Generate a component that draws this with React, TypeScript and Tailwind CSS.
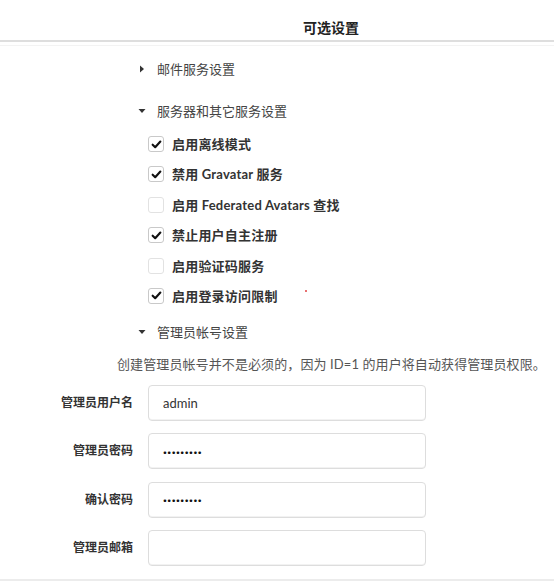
import React from 'react'

const FONT = "font-['Lato','Noto_Sans_CJK_SC',sans-serif]"

const OPTIONS = [
  { label: '启用离线模式', checked: true },
  { label: '禁用 Gravatar 服务', checked: true },
  { label: '启用 Federated Avatars 查找', checked: false },
  { label: '禁止用户自主注册', checked: true },
  { label: '启用验证码服务', checked: false },
  { label: '启用登录访问限制', checked: true },
]

const FIELDS = [
  { label: '管理员用户名', value: 'admin', dots: false },
  { label: '管理员密码', value: '·········', dots: true },
  { label: '确认密码', value: '·········', dots: true },
  { label: '管理员邮箱', value: '', dots: false },
]

function Arrow({ open }: { open: boolean }) {
  return open ? (
    <svg width="8" height="8" viewBox="0 0 8 8">
      <path d="M0.5 2 L7.5 2 L4 6 Z" fill="#333" />
    </svg>
  ) : (
    <svg width="8" height="8" viewBox="0 0 8 8">
      <path d="M2 0.5 L6 4 L2 7.5 Z" fill="#333" />
    </svg>
  )
}

function Section({ title, open }: { title: string; open: boolean }) {
  return (
    <div className="flex items-center h-[20px] pl-[138px]">
      <Arrow open={open} />
      <span className="ml-[11px] text-[13px] text-[#444] leading-[20px]">{title}</span>
    </div>
  )
}

function Check({ checked }: { checked: boolean }) {
  return (
    <span className={`flex items-center justify-center w-[16px] h-[16px] rounded-[3px] border ${checked ? 'border-[#c9c9c9]' : 'border-[#e2e2e2]'} bg-white`}>
      {checked && (
        <svg width="11" height="11" viewBox="0 0 12 12">
          <path d="M1.8 6.2 L4.6 9 L10.2 2.8" fill="none" stroke="#111" strokeWidth="2.3" strokeLinecap="round" strokeLinejoin="round" />
        </svg>
      )}
    </span>
  )
}

export default function App() {
  return (
    <div className={`relative w-[554px] h-[588px] bg-white overflow-hidden ${FONT}`}>
      {/* header */}
      <div className="h-[42px] pt-[18px] pl-[108px] flex justify-center border-b-2 border-[#dedede]">
        <h3 className="text-[14px] font-bold text-[#222] leading-[20px] h-[20px]">可选设置</h3>
      </div>
      <div className="mt-[3px] h-px bg-[#f3f3f3]" />

      <div className="mt-[13px]">
        <Section title="邮件服务设置" open={false} />
      </div>
      <div className="mt-[22px]">
        <Section title="服务器和其它服务设置" open={true} />
      </div>

      <div className="mt-[13px] pl-[148px] flex flex-col gap-[10.4px]">
        {OPTIONS.map(o => (
          <div key={o.label} className="flex items-center h-[20px]">
            <Check checked={o.checked} />
            <span className="ml-[8px] text-[13px] font-bold text-[#333] leading-[20px] whitespace-nowrap tracking-[0.2px]">{o.label}</span>
          </div>
        ))}
      </div>

      <div className="mt-[16px]">
        <Section title="管理员帐号设置" open={true} />
      </div>

      <p className="mt-[12px] pl-[117px] text-[13px] text-[#555] leading-[20px] whitespace-nowrap tracking-[0.1px]">
        创建管理员帐号并不是必须的，因为 ID=1 的用户将自动获得管理员权限。
      </p>

      <div className="mt-[11px] flex flex-col gap-[12.5px]">
        {FIELDS.map(f => (
          <div key={f.label} className="flex items-center h-[36px]">
            <label className="w-[133px] text-right text-[12px] font-bold text-[#333]">{f.label}</label>
            <input
              readOnly
              value={f.value}
              className={`ml-[15px] w-[278px] h-[36px] px-[14px] rounded-[4px] border border-[#dddddd] bg-white outline-none shadow-[inset_0_-1px_0_#f2f2f2] ${f.dots ? 'text-[14px] font-bold text-[#111] tracking-[0.5px]' : 'text-[13px] text-[#333]'}`}
            />
          </div>
        ))}
      </div>

      <div className="mt-[13px] h-[2px] bg-[#ececec]" />

      {/* stray red pixel in the capture */}
      <span className="absolute left-[305px] top-[290px] w-[2px] h-[2px] bg-[#e04040] rounded-full" />
    </div>
  )
}
